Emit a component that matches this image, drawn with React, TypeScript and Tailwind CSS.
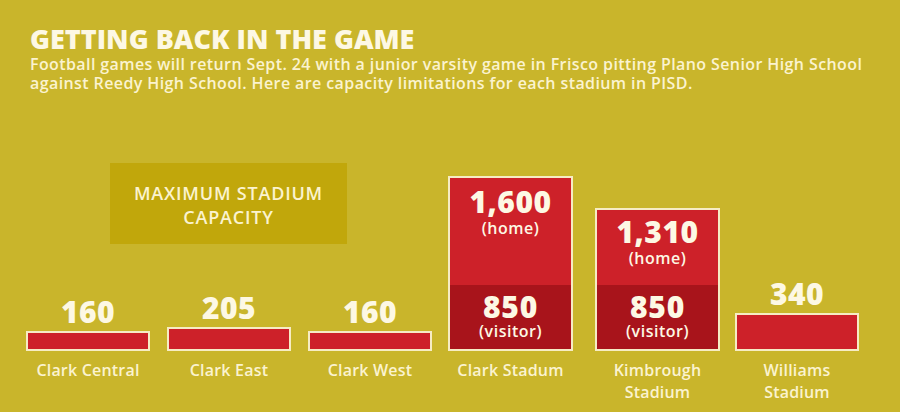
type Bar = { name: string[]; value: string; height: number }

const SMALL: Bar[] = [
  { name: ['Clark Central'], value: '160', height: 20 },
  { name: ['Clark East'], value: '205', height: 24 },
  { name: ['Clark West'], value: '160', height: 20 },
]

function Label({ lines }: { lines: string[] }) {
  return (
    <div className="h-[61px] pt-[8px] text-center text-[16px] font-semibold leading-[22px] tracking-[0.2px] text-[#fbf3cf]">
      {lines.map((l) => (
        <div key={l}>{l}</div>
      ))}
    </div>
  )
}

function SimpleBar({ bar }: { bar: Bar }) {
  return (
    <div className="flex w-[124px] flex-col items-center">
      <div className="mb-[4px] text-[30px] font-extrabold leading-none tracking-[0.5px] text-[#fdf8e4]">
        {bar.value}
      </div>
      <div
        className="w-full border-2 border-[#f6ecc4] bg-[#cd2129]"
        style={{ height: bar.height }}
      />
      <Label lines={bar.name} />
    </div>
  )
}

function SplitBar({
  name,
  home,
  homeHeight,
  homePad,
}: {
  name: string[]
  home: string
  homeHeight: number
  homePad: number
}) {
  return (
    <div className="flex w-[125px] flex-col items-center">
      <div className="w-full border-2 border-[#f6ecc4] text-center text-[#fdf8e4]">
        <div className="bg-[#cd2129]" style={{ height: homeHeight, paddingTop: homePad }}>
          <div className="text-[30px] font-extrabold leading-none tracking-[0.5px]">{home}</div>
          <div className="mt-[3px] text-[16px] font-semibold leading-[16px] tracking-[0.5px]">(home)</div>
        </div>
        <div className="h-[64px] bg-[#a8141b] pt-[7px]">
          <div className="text-[30px] font-extrabold leading-none tracking-[0.8px]">850</div>
          <div className="mt-[1px] text-[16px] font-semibold leading-[16px] tracking-[0.5px]">(visitor)</div>
        </div>
      </div>
      <Label lines={name} />
    </div>
  )
}

export default function App() {
  return (
    <div
      className="h-[412px] w-[900px] overflow-hidden bg-[#c9b52b]"
      style={{ fontFamily: '"Open Sans", "DejaVu Sans", sans-serif' }}
    >
      <div className="px-[30px] pt-[22px]">
        <h1 className="text-[27px] font-extrabold leading-[34px] text-[#fdf8e4]">
          GETTING BACK IN THE GAME
        </h1>
        <p className="mt-[-1px] text-[16px] font-semibold leading-[19px] tracking-[0.4px] text-[#fbf3cf]">
          Football games will return Sept. 24 with a junior varsity game in Frisco pitting Plano Senior High School
          <br />
          against Reedy High School. Here are capacity limitations for each stadium in PISD.
        </p>
      </div>

      <div className="mt-[70px] flex items-end pl-[26px]">
        <div className="flex flex-col">
          <div className="mb-[49px] ml-[84px] flex h-[81px] w-[237px] flex-col items-center justify-center bg-[#c1a70b] pt-[2px] text-center text-[18px] font-semibold leading-[24px] tracking-[0.8px] text-[#fbf3cf]">
            <div>MAXIMUM STADIUM</div>
            <div>CAPACITY</div>
          </div>
          <div className="flex items-end gap-[17px]">
            {SMALL.map((b) => (
              <SimpleBar key={b.name[0]} bar={b} />
            ))}
          </div>
        </div>
        <div className="ml-[16px] flex items-end">
          <SplitBar name={['Clark Stadum']} home="1,600" homeHeight={107} homePad={9} />
          <div className="ml-[22px]">
            <SplitBar name={['Kimbrough', 'Stadium']} home="1,310" homeHeight={75} homePad={7} />
          </div>
          <div className="ml-[15px]">
            <SimpleBar bar={{ name: ['Williams', 'Stadium'], value: '340', height: 38 }} />
          </div>
        </div>
      </div>
    </div>
  )
}
